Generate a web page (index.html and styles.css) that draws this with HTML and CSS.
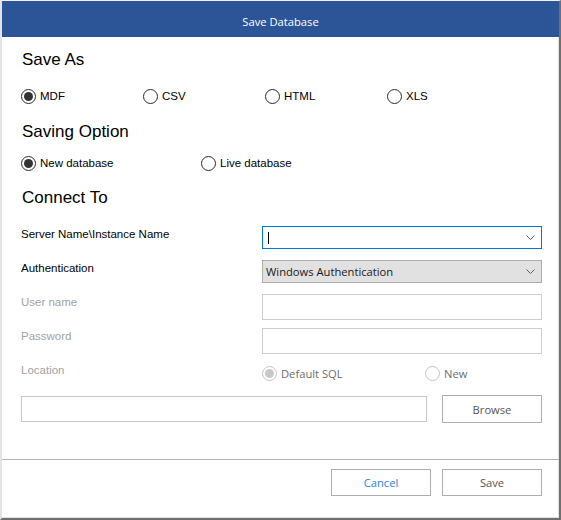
FILE: index.html
```html
<!DOCTYPE html>
<html>
<head>
<meta charset="utf-8">
<title>Save Database</title>
<link rel="stylesheet" href="styles.css">
</head>
<body>
<div class="window">
  <div class="titlebar">Save Database</div>
  <div class="content">
    <h2 class="heading h-first">Save As</h2>
    <div class="radio-row cols-4">
      <label class="opt"><span class="radio checked"></span><span class="opt-text">MDF</span></label>
      <label class="opt"><span class="radio"></span><span class="opt-text">CSV</span></label>
      <label class="opt"><span class="radio"></span><span class="opt-text">HTML</span></label>
      <label class="opt"><span class="radio"></span><span class="opt-text">XLS</span></label>
    </div>

    <h2 class="heading h-second">Saving Option</h2>
    <div class="radio-row cols-2 row-second">
      <label class="opt"><span class="radio checked"></span><span class="opt-text">New database</span></label>
      <label class="opt"><span class="radio"></span><span class="opt-text">Live database</span></label>
    </div>

    <h2 class="heading h-third">Connect To</h2>
    <div class="form">
      <div class="form-row">
        <div class="label">Server Name\Instance Name</div>
        <div class="combo focused">
          <span class="caret"></span>
          <svg class="chev" width="9" height="5" viewBox="0 0 9 5"><polyline points="0.5,0.5 4.5,4.5 8.5,0.5" fill="none" stroke="#606060" stroke-width="1"/></svg>
        </div>
      </div>
      <div class="form-row">
        <div class="label">Authentication</div>
        <div class="combo filled">
          <span class="combo-text">Windows Authentication</span>
          <svg class="chev" width="9" height="5" viewBox="0 0 9 5"><polyline points="0.5,0.5 4.5,4.5 8.5,0.5" fill="none" stroke="#606060" stroke-width="1"/></svg>
        </div>
      </div>
      <div class="form-row">
        <div class="label disabled">User name</div>
        <div class="textbox"></div>
      </div>
      <div class="form-row">
        <div class="label disabled">Password</div>
        <div class="textbox"></div>
      </div>
      <div class="form-row">
        <div class="label disabled">Location</div>
        <div class="loc-opts">
          <label class="opt loc-opt"><span class="radio dis checked"></span><span class="loc-text">Default SQL</span></label>
          <label class="opt loc-opt"><span class="radio dis"></span><span class="loc-text">New</span></label>
        </div>
      </div>
      <div class="path-row">
        <div class="path-box"></div>
        <div class="btn browse">Browse</div>
      </div>
    </div>
  </div>
  <div class="footer">
    <div class="btn cancel">Cancel</div>
    <div class="btn save">Save</div>
  </div>
</div>
</body>
</html>
```
FILE: styles.css
```css
html, body {
  margin: 0;
  padding: 0;
  background: #ffffff;
}

.window {
  box-sizing: border-box;
  width: 561px;
  height: 520px;
  border-top: 1px solid #f2f2f2;
  border-left: 2px solid #e4e4e4;
  border-right: 2px solid #6f6f6f;
  border-bottom: 2px solid #6f6f6f;
  box-shadow: inset -1px -1px 0 #e2e2e2;
  background: #ffffff;
  display: flex;
  flex-direction: column;
  font-family: "Liberation Sans", Arial, sans-serif;
}

.titlebar {
  box-sizing: border-box;
  height: 36px;
  padding-top: 5px;
  background: #2b5597;
  color: #ffffff;
  font-family: "Open Sans", "Noto Sans", sans-serif;
  font-size: 11.2px;
  display: flex;
  align-items: center;
  justify-content: center;
}

.content {
  padding-left: 19px;
  width: 521px;
}

.heading {
  margin: 0 0 0 1px;
  font-family: "Liberation Sans", Arial, sans-serif;
  font-weight: normal;
  font-size: 17px;
  line-height: 20px;
  height: 20px;
  color: #000000;
}

.h-first { margin-top: 13px; }
.h-second { margin-top: 18px; }
.h-third { margin-top: 17px; }

.radio-row {
  display: flex;
  margin-top: 18px;
  height: 16px;
}

.row-second { margin-top: 13px; }

.cols-4 .opt { width: 122px; }
.cols-2 .opt { width: 180px; }

.opt {
  display: flex;
  align-items: center;
  height: 16px;
}

.radio {
  box-sizing: border-box;
  width: 15px;
  height: 15px;
  border-radius: 50%;
  border: 1px solid #2b2b2b;
  background: #ffffff;
  flex: none;
  display: flex;
  align-items: center;
  justify-content: center;
}

.radio.checked::after {
  content: "";
  width: 9px;
  height: 9px;
  border-radius: 50%;
  background: #333333;
}

.radio.dis {
  border-color: #c4c4c4;
}

.radio.dis.checked::after {
  background: #c8c8c8;
}

.opt-text {
  margin-left: 4px;
  font-size: 11.5px;
  line-height: 16px;
  color: #000000;
}

.form {
  margin-top: 18px;
}

.form-row {
  display: flex;
  height: 34px;
}

.label {
  width: 241px;
  font-size: 11.5px;
  line-height: 17px;
  color: #000000;
}

.label.disabled {
  color: #a2a2a2;
}

.combo {
  box-sizing: border-box;
  width: 280px;
  height: 23px;
  border: 1px solid #adadad;
  display: flex;
  align-items: center;
  position: relative;
}

.combo.focused {
  border-color: #0078d7;
  background: #ffffff;
}

.combo.filled {
  background: #e1e1e1;
}

.caret {
  width: 1px;
  height: 12px;
  background: #000000;
  margin-left: 5px;
}

.combo-text {
  margin-left: 3px;
  font-family: "Open Sans", "Noto Sans", sans-serif;
  font-size: 11.2px;
  line-height: 21px;
  color: #1a1a1a;
}

.chev {
  position: absolute;
  right: 6px;
  top: 8px;
}

.textbox {
  box-sizing: border-box;
  width: 280px;
  height: 26px;
  border: 1px solid #cccccc;
  background: #ffffff;
}

.loc-opts {
  display: flex;
  padding-top: 4px;
  height: 15px;
}

.loc-opt {
  height: 15px;
}

.loc-opt:first-child {
  width: 163px;
}

.loc-text {
  margin-left: 4px;
  font-family: "Open Sans", "Noto Sans", sans-serif;
  font-size: 11.2px;
  line-height: 15px;
  color: #6d6d6d;
}

.path-row {
  display: flex;
  align-items: center;
  height: 26px;
}

.path-box {
  box-sizing: border-box;
  width: 406px;
  height: 26px;
  border: 1px solid #c8c8c8;
}

.btn {
  box-sizing: border-box;
  width: 100px;
  height: 28px;
  border: 1px solid #adadad;
  background: #ffffff;
  display: flex;
  align-items: center;
  justify-content: center;
  font-family: "Open Sans", "Noto Sans", sans-serif;
  font-size: 11.2px;
  color: #555555;
}

.browse {
  margin-left: 15px;
}

.footer {
  margin-top: 37px;
  border-top: 1px solid #b4b4b4;
  padding-top: 9px;
  padding-right: 17px;
  display: flex;
  justify-content: flex-end;
  gap: 11px;
}

.footer .btn {
  height: 27px;
}

.cancel {
  color: #2b7fd9;
}
```
